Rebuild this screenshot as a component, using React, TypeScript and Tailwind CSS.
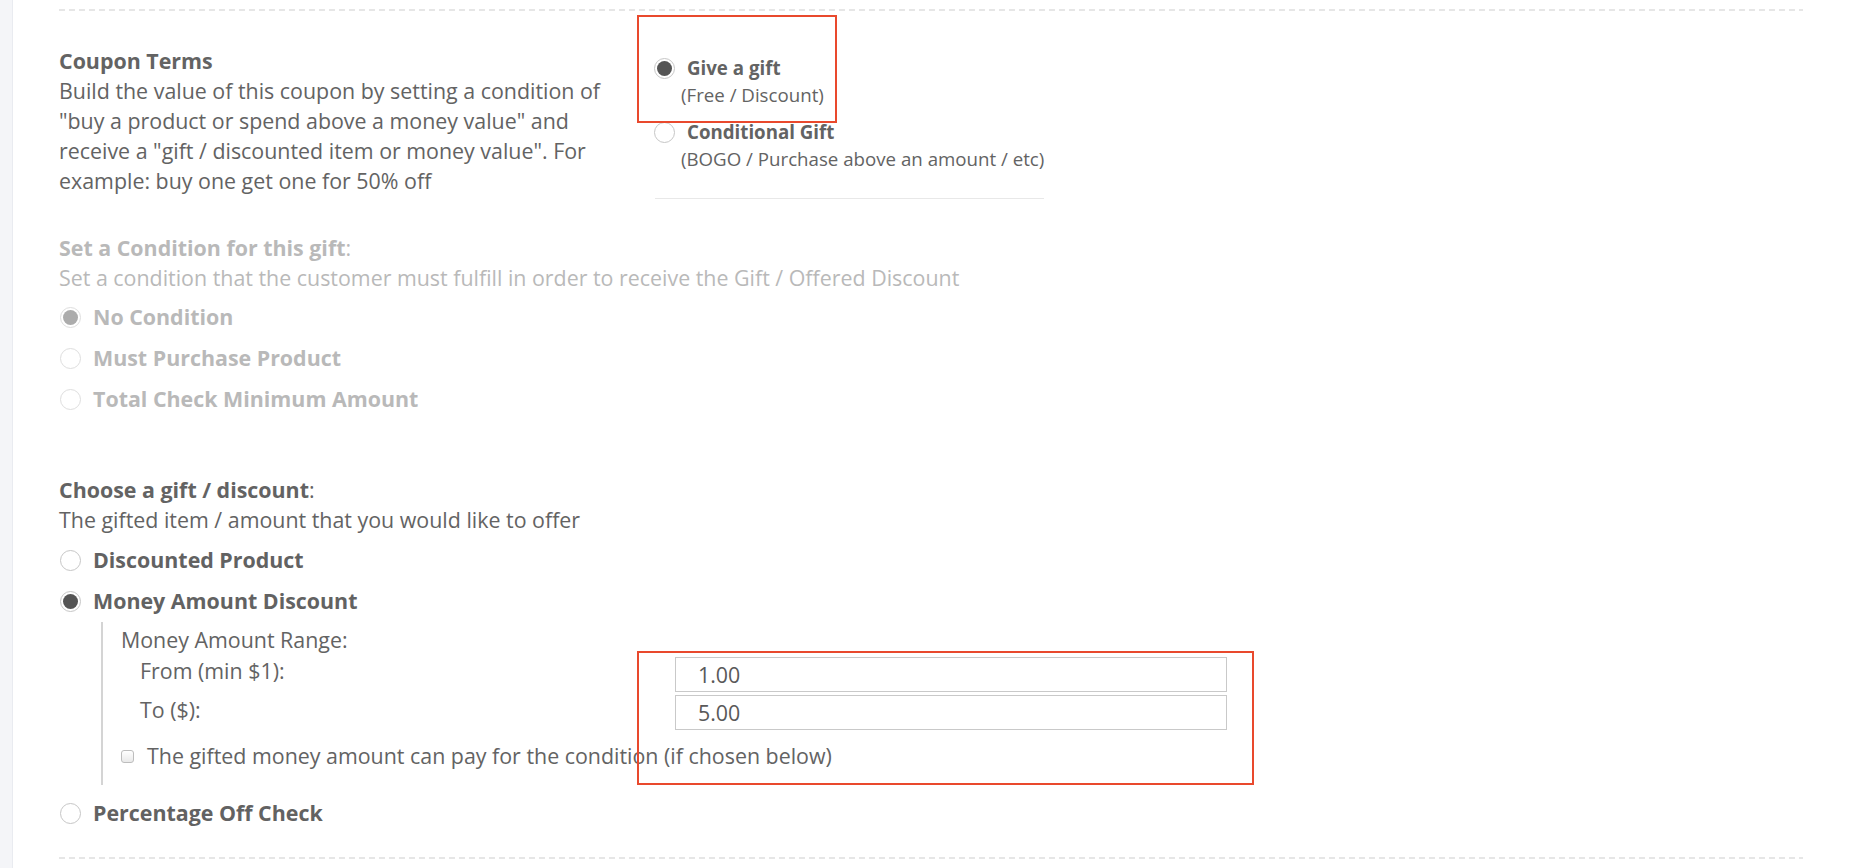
import React from 'react'

type RadioProps = {
  checked?: boolean
  disabled?: boolean
}

function Radio({ checked, disabled }: RadioProps) {
  return (
    <span
      className={`ml-[1px] flex h-[21px] w-[21px] shrink-0 items-center justify-center rounded-full border bg-white ${
        disabled ? 'border-[#dedede]' : 'border-[#c6c6c6]'
      }`}
    >
      {checked && (
        <span className={`h-[15px] w-[15px] rounded-full ${disabled ? 'bg-[#acacac]' : 'bg-[#555]'}`} />
      )}
    </span>
  )
}

function Dashed() {
  return <div className="h-[2px] w-full bg-[repeating-linear-gradient(90deg,#e6e6e6_0_6px,transparent_6px_10px)]" />
}

function OptionRow({ label, checked, disabled }: { label: string; checked?: boolean; disabled?: boolean }) {
  return (
    <div className="flex h-[41px] items-center gap-[12px]">
      <Radio checked={checked} disabled={disabled} />
      <span className={`text-[21.4px] font-bold ${disabled ? 'text-[#b9b9b9]' : 'text-[#626262]'}`}>{label}</span>
    </div>
  )
}

const conditions = [
  { label: 'No Condition', checked: true },
  { label: 'Must Purchase Product', checked: false },
  { label: 'Total Check Minimum Amount', checked: false },
]

export default function App() {
  return (
    <div className="relative flex h-[868px] w-full overflow-hidden bg-white font-['Open_Sans',sans-serif] text-[#636363]">
      {/* left rail */}
      <div className="w-[13px] shrink-0 border-r border-[#e9ebf0] bg-[#f4f5f8]" />

      <main className="flex-1 pl-[46px] pr-[47px] pt-[9px]">
        <Dashed />

        {/* Coupon terms */}
        <section className="flex pt-[35px]">
          <div className="w-[594px] shrink-0">
            <h3 className="text-[21.4px] font-bold leading-[30px]">Coupon Terms</h3>
            <p className="w-[570px] text-[21.4px] leading-[30px]">
              Build the value of this coupon by setting a condition of "buy a product or spend above a money value" and
              receive a "gift / discounted item or money value". For example: buy one get one for 50% off
            </p>
          </div>

          <div className="mt-[8px]">
            <div>
              <div className="flex h-[28px] items-center gap-[12px]">
                <Radio checked />
                <span className="text-[18.7px] font-bold">Give a gift</span>
              </div>
              <div className="pl-[28px] text-[18.7px] leading-[26px]">(Free / Discount)</div>
            </div>
            <div className="mt-[10px]">
              <div className="flex h-[28px] items-center gap-[12px]">
                <Radio />
                <span className="text-[18.7px] font-bold">Conditional Gift</span>
              </div>
              <div className="pl-[28px] text-[18.7px] leading-[26px]">(BOGO / Purchase above an amount / etc)</div>
            </div>
            <div className="ml-[2px] mt-[26px] h-px w-[389px] bg-[#e8e8e8]" />
          </div>
        </section>

        {/* Condition (disabled) */}
        <section className="mt-[34px] text-[#b9b9b9]">
          <div className="text-[21.4px] leading-[30px]">
            <span className="font-bold">Set a Condition for this gift</span>:
          </div>
          <div className="text-[21.4px] leading-[30px]">
            Set a condition that the customer must fulfill in order to receive the Gift / Offered Discount
          </div>
          <div className="mt-[4px]">
            {conditions.map(c => (
              <OptionRow key={c.label} label={c.label} checked={c.checked} disabled />
            ))}
          </div>
        </section>

        {/* Gift / discount */}
        <section className="mt-[55px]">
          <div className="text-[21.4px] leading-[30px]">
            <span className="font-bold">Choose a gift / discount</span>:
          </div>
          <div className="text-[21.4px] leading-[30px]">The gifted item / amount that you would like to offer</div>
          <div className="mt-[5px]">
            <OptionRow label="Discounted Product" />
            <OptionRow label="Money Amount Discount" checked />
          </div>

          <div className="ml-[42px] border-l-2 border-[#d4d4d4] pb-[14px] pl-[18px] pt-[5px] text-[21.4px]">
            <div className="leading-[26px]">Money Amount Range:</div>
            <div className="mt-[4px] grid grid-cols-[554px_552px] gap-y-[3px]">
              <div className="flex h-[35px] items-center pb-[7px] pl-[19px]">From (min $1):</div>
              <input
                readOnly
                value="1.00"
                className="h-[35px] border border-[#c9c9c9] bg-white px-[22px] text-[21.4px] text-[#595959] outline-none"
              />
              <div className="flex h-[35px] items-center pb-[5px] pl-[19px]">To ($):</div>
              <input
                readOnly
                value="5.00"
                className="h-[35px] border border-[#c9c9c9] bg-white px-[22px] text-[21.4px] text-[#595959] outline-none"
              />
            </div>
            <label className="mt-[11px] flex h-[30px] items-center gap-[13px]">
              <span className="h-[13px] w-[13px] shrink-0 rounded-[3px] border border-[#bdbdbd] bg-gradient-to-b from-white to-[#e9e9e9]" />
              <span>The gifted money amount can pay for the condition (if chosen below)</span>
            </label>
          </div>

          <div className="mt-[8px]">
            <OptionRow label="Percentage Off Check" />
          </div>
        </section>

        <div className="mt-[23px]">
          <Dashed />
        </div>
      </main>

      {/* review annotations */}
      <div className="pointer-events-none absolute left-[637px] top-[15px] h-[108px] w-[200px] border-2 border-[#e9492d]" />
      <div className="pointer-events-none absolute left-[637px] top-[651px] h-[134px] w-[617px] border-2 border-[#e9492d]" />
    </div>
  )
}
